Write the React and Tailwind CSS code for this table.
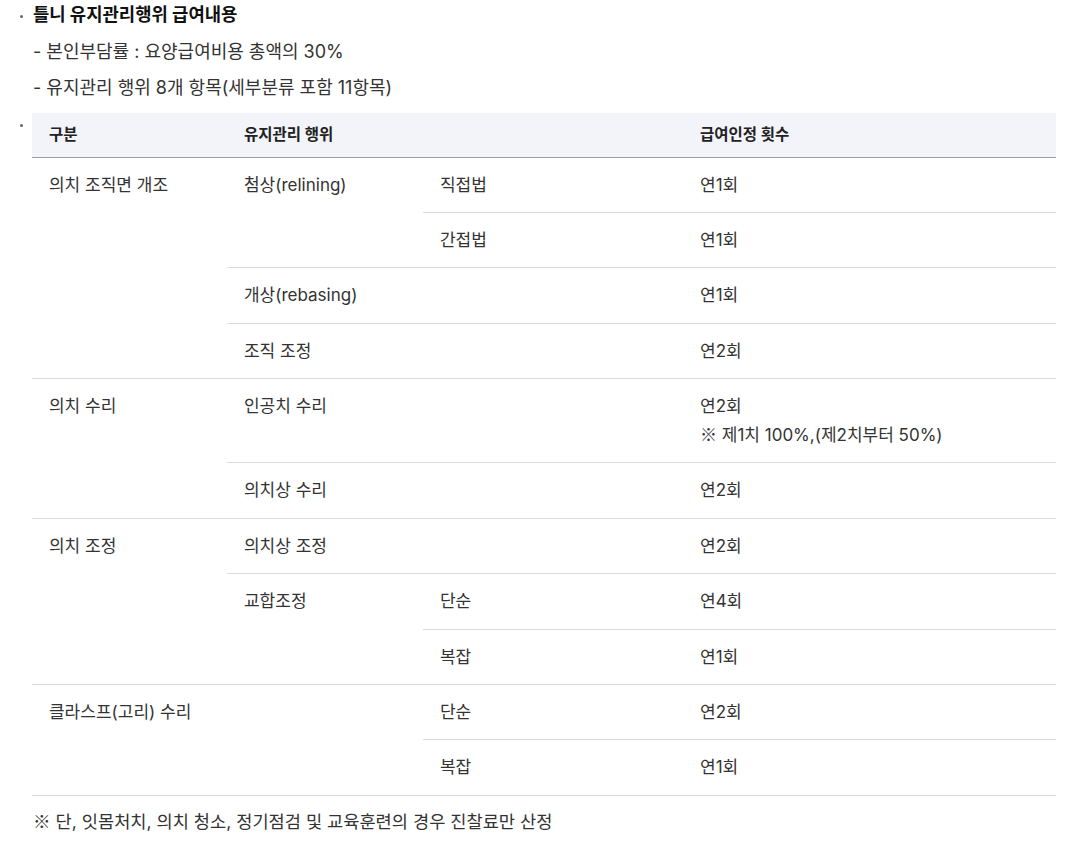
const rows = [
  [
    { text: '의치 조직면 개조', rowSpan: 4 },
    { text: '첨상(relining)', rowSpan: 2 },
    { text: '직접법' },
    { text: '연1회' },
  ],
  [{ text: '간접법' }, { text: '연1회' }],
  [{ text: '개상(rebasing)', colSpan: 2 }, { text: '연1회' }],
  [{ text: '조직 조정', colSpan: 2 }, { text: '연2회' }],
  [
    { text: '의치 수리', rowSpan: 2 },
    { text: '인공치 수리', colSpan: 2 },
    { text: ['연2회', <><Mark /> 제1치 100%,(제2치부터 50%)</>] },
  ],
  [{ text: '의치상 수리', colSpan: 2 }, { text: '연2회' }],
  [
    { text: '의치 조정', rowSpan: 3 },
    { text: '의치상 조정', colSpan: 2 },
    { text: '연2회' },
  ],
  [{ text: '교합조정', rowSpan: 2 }, { text: '단순' }, { text: '연4회' }],
  [{ text: '복잡' }, { text: '연1회' }],
  [
    { text: '클라스프(고리) 수리', rowSpan: 2, colSpan: 2 },
    { text: '단순' },
    { text: '연2회' },
  ],
  [{ text: '복잡' }, { text: '연1회' }],
];

// Inter의 ※ 글리프가 너무 작아서 CJK 폰트로 대체
function Mark() {
  return <span style={{ fontFamily: '"Noto Sans CJK KR", sans-serif' }}>※</span>;
}

function Dot() {
  return <span className="block w-[3px] h-[3px] rounded-full bg-[#666]" />;
}

export default function App() {
  return (
    <div
      className="bg-white min-h-[857px] pl-5 pr-[19px] text-[#333] text-[17px]"
      style={{ fontFamily: 'Inter, "Noto Sans CJK KR", sans-serif' }}
    >
      <div className="flex items-center h-[34px] pb-1">
        <div className="w-[13px] flex items-center pt-[2px]">
          <Dot />
        </div>
        <span className="font-bold text-[#111] text-[17.75px]">틀니 유지관리행위 급여내용</span>
      </div>
      <div className="pl-[13px] leading-[36px] text-[18px]">
        <div>- 본인부담률 : 요양급여비용 총액의 30%</div>
        <div>- 유지관리 행위 8개 항목(세부분류 포함 11항목)</div>
      </div>

      <div className="flex mt-[7px]">
        <div className="w-[12px] pt-[11px]">
          <Dot />
        </div>
        <table className="w-[1024px] border-collapse table-fixed">
          <colgroup>
            <col className="w-[195px]" />
            <col className="w-[196px]" />
            <col className="w-[260px]" />
            <col className="w-[373px]" />
          </colgroup>
          <thead>
            <tr className="bg-[#f3f4f9] border-b border-[#9c9aac] h-[44px]">
              <th className="text-left font-bold text-[15.5px] text-[#222] pl-[17px]">구분</th>
              <th colSpan={2} className="text-left font-bold text-[15.5px] text-[#222] pl-[17px]">
                유지관리 행위
              </th>
              <th className="text-left font-bold text-[15.5px] text-[#222] pl-[17px]">급여인정 횟수</th>
            </tr>
          </thead>
          <tbody>
            {rows.map((row, i) => (
              <tr key={i}>
                {row.map((cell, j) => (
                  <td
                    key={j}
                    rowSpan={cell.rowSpan}
                    colSpan={cell.colSpan}
                    className="align-top border-b border-[#dcdcdc] pl-[17px] pt-[13px] pb-[13.4px] leading-[28px]"
                  >
                    {Array.isArray(cell.text)
                      ? cell.text.map((t, k) => <div key={k}>{t}</div>)
                      : cell.text}
                  </td>
                ))}
              </tr>
            ))}
          </tbody>
        </table>
      </div>

      <p className="pl-[13px] mt-[11px] leading-[28px] text-[17.6px]">
        <Mark /> 단, 잇몸처치, 의치 청소, 정기점검 및 교육훈련의 경우 진찰료만 산정
      </p>
    </div>
  );
}
